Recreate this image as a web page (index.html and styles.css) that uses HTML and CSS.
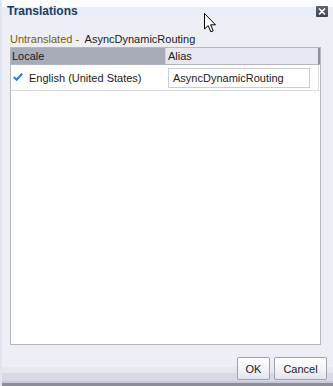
FILE: index.html
```html
<!DOCTYPE html>
<html>
<head>
<meta charset="utf-8">
<link rel="stylesheet" href="styles.css">
</head>
<body>
<div class="dialog">
  <div class="titlebar">
    <span class="title">Translations</span>
    <span class="close">
      <svg width="12" height="11" viewBox="0 0 12 11"><path d="M3 2.5 L9 8.5 M9 2.5 L3 8.5" stroke="#fff" stroke-width="1.6" fill="none"/></svg>
    </span>
  </div>
  <div class="main">
    <div class="caption"><span class="muted">Untranslated -</span>&nbsp; AsyncDynamicRouting</div>
    <div class="grid">
      <div class="head">
        <div class="th th-locale">Locale</div>
        <div class="th th-alias">Alias</div>
      </div>
      <div class="row">
        <div class="td td-locale">
          <svg class="check" width="10" height="8" viewBox="0 0 10 8"><path d="M0.8 4 L3.6 6.8 L9.2 0.8" stroke="#2a7fd6" stroke-width="2" fill="none"/></svg>
          <span>English (United States)</span>
        </div>
        <div class="td td-alias"><div class="input">AsyncDynamicRouting</div></div>
      </div>
    </div>
  </div>
  <div class="footer">
    <button class="btn btn-ok">OK</button>
    <button class="btn btn-cancel">Cancel</button>
  </div>
  <svg class="cursor" width="14" height="20" viewBox="0 0 14 20"><path d="M0.5 0.5 L0.5 16 L4.2 12.6 L6.8 18.8 L9.2 17.8 L6.6 11.8 L11.5 11.8 Z" fill="#fff" stroke="#000" stroke-width="1"/></svg>
</div>
</body>
</html>
```
FILE: styles.css
```css
html, body {
  margin: 0;
  padding: 0;
}
body {
  width: 333px;
  height: 386px;
  overflow: hidden;
  font-family: "Liberation Sans", Arial, sans-serif;
  font-size: 11px;
  color: #1c1c1c;
  background: #eeeef6;
}
.dialog {
  position: relative;
  width: 333px;
  height: 386px;
  display: flex;
  flex-direction: column;
  background: #eeeef6;
  border-left: 2px solid #e4e4ee;
  box-sizing: border-box;
}
.titlebar {
  height: 22px;
  display: flex;
  align-items: flex-start;
  justify-content: space-between;
  padding: 3px 5px 0 5px;
  box-sizing: border-box;
  background: linear-gradient(#fbfcfe 0, #fbfcfe 7px, #e9edf7 7px, #eaeef8 18px, #eeeef6 18px);
}
.title {
  font-size: 12px;
  font-weight: bold;
  color: #163f63;
  line-height: 16px;
}
.close {
  width: 12px;
  height: 11px;
  margin-top: 3px;
  background: linear-gradient(#5e6470, #3e434c);
  border-radius: 1px;
  display: flex;
}
.main {
  padding: 11px 10px 0 8px;
  flex: 1;
  display: flex;
  flex-direction: column;
}
.caption {
  line-height: 13px;
  height: 14px;
  color: #1c1c1c;
}
.muted {
  color: #7a5e00;
}
.grid {
  width: 311px;
  height: 298px;
  box-sizing: border-box;
  border: 1px solid #b6b8c0;
  background: #fff;
  display: flex;
  flex-direction: column;
}
.head {
  display: flex;
  height: 16px;
  border-bottom: 1px solid #b2b5c0;
}
.th {
  line-height: 16px;
  padding-left: 1px;
  box-sizing: border-box;
  color: #1c1c1c;
}
.th-locale {
  width: 155px;
  background: #a8acb9;
  border-right: 1px solid #d0d2dc;
}
.th-alias {
  flex: 1;
  background: #e8e8f3;
  border-right: 2px solid #8e9098;
  padding-left: 2px;
}
.row {
  display: flex;
  height: 25px;
  border-bottom: 1px solid #dadbe2;
  margin-right: 1px;
  border-right: 1px solid #dadbe2;
}
.td {
  display: flex;
  align-items: center;
  box-sizing: border-box;
}
.td-locale {
  width: 156px;
  padding-left: 2px;
}
.check {
  margin-right: 6px;
  margin-top: -1px;
}
.td-alias {
  flex: 1;
  padding-left: 1px;
}
.input {
  width: 142px;
  height: 20px;
  box-sizing: border-box;
  border: 1px solid #cbcdd5;
  background: #fff;
  line-height: 18px;
  padding-left: 4px;
}
.footer {
  height: 41px;
  display: flex;
  justify-content: flex-end;
  align-items: flex-start;
  gap: 4px;
  padding: 12px 6px 0 0;
  box-sizing: border-box;
  background: linear-gradient(#eeeef6 0, #eeeef6 22px, #e5e8ef 22px, #e5e8ef 28px, #d6d8e6 28px, #d6d8e6 36px, #c9cad8 36px, #c9cad8 38px, #8c8d96 38px);
}
.btn {
  height: 23px;
  font-family: "Liberation Sans", Arial, sans-serif;
  font-size: 11px;
  color: #1c1c1c;
  border: 1px solid #9fa3ad;
  border-radius: 2px;
  background: linear-gradient(#ffffff, #f1f2f6 60%, #e2e4ec);
  padding: 0;
  margin: 0;
}
.btn-ok {
  width: 33px;
}
.btn-cancel {
  width: 53px;
}
.cursor {
  position: absolute;
  left: 202px;
  top: 13px;
}
```
